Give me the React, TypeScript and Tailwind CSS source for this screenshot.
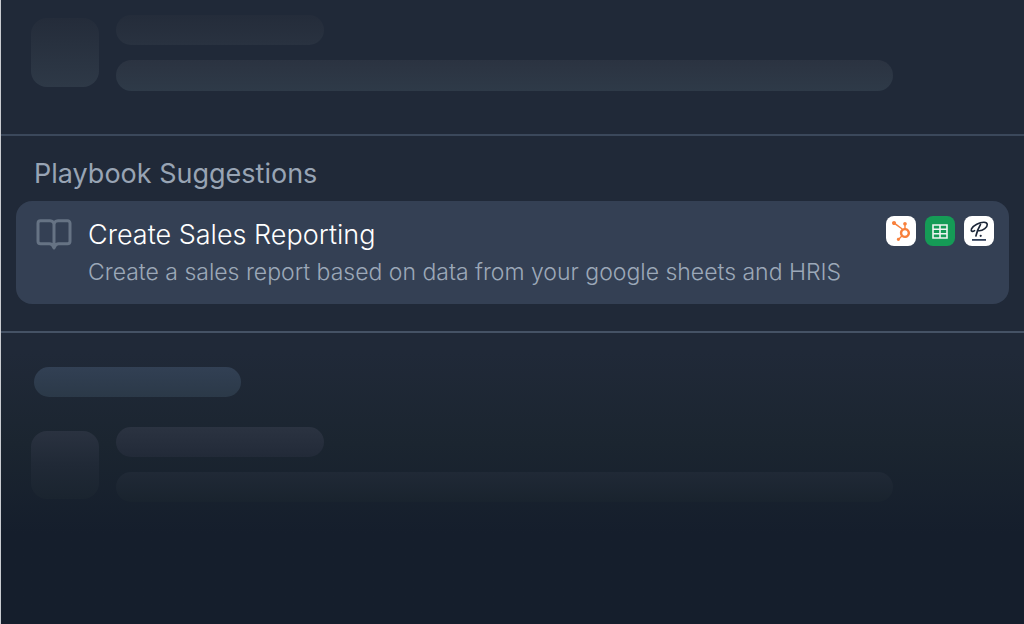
import React from "react"
import { FaHubspot } from "react-icons/fa"

function BookIcon() {
  return (
    <svg viewBox="0 0 36 36" className="h-[38px] w-9 shrink-0" fill="none" aria-hidden="true">
      <path
        d="M18 7.5C18 5.5 16.5 3.8 14 3.8H4.5C3 3.8 2 4.8 2 6.3V24.2C2 25.7 3 26.7 4.5 26.7H13.5C15.5 26.7 17 28.5 18 31C19 28.5 20.5 26.7 22.5 26.7H31.5C33 26.7 34 25.7 34 24.2V6.3C34 4.8 33 3.8 31.5 3.8H22C19.5 3.8 18 5.5 18 7.5ZM18 7.5V29"
        stroke="#667384"
        strokeWidth="3"
        strokeLinejoin="round"
      />
    </svg>
  )
}

// google sheets grid
function SheetsLogo() {
  return (
    <svg viewBox="0 0 30 30" className="h-full w-full" fill="none" aria-hidden="true">
      <path
        d="M8 9h14v13H8zM15 9v13M8 13.3h14M8 17.7h14"
        stroke="#eef4f1"
        strokeWidth="1.6"
      />
    </svg>
  )
}

// handwritten P with an underline
function PersonioLogo() {
  return (
    <svg viewBox="0 0 30 30" className="h-full w-full" fill="none" aria-hidden="true">
      <path
        d="M16.5 8.5C14.4 12 12.8 16 11.9 20M10.6 14.6C8.4 16.1 6.6 15.3 7.5 12.8C9.2 9.2 15.6 6.2 20 6.3C24.2 6.5 24.2 10 20.8 12.6C18.6 14.3 16.3 15 14.2 14.7"
        stroke="#1b2638"
        strokeWidth="1.6"
        strokeLinecap="round"
        strokeLinejoin="round"
      />
      <circle cx="16.7" cy="19.8" r="1.1" fill="#1b2638" />
      <path d="M8 23.9h14" stroke="#31405a" strokeWidth="1.8" />
    </svg>
  )
}

const apps = [
  { name: "HubSpot", bg: "bg-white", logo: <FaHubspot className="h-5 w-5 text-[#f8803c]" /> },
  { name: "Google Sheets", bg: "bg-[#159b56]", logo: <SheetsLogo /> },
  { name: "Personio", bg: "bg-white", logo: <PersonioLogo /> },
]

export default function App() {
  return (
    <main className="flex min-h-screen flex-col border-l border-[#c9ccd1] bg-[#202938] font-['Inter',sans-serif]">
      {/* previous result, still loading */}
      <div className="flex gap-[17px] border-b-2 border-[#3b485b] pt-[15px] pr-[131px] pb-[43px] pl-[30px]">
        <div className="mt-[3px] h-[69px] w-[68px] shrink-0 rounded-2xl bg-linear-to-b from-[#242c3a] to-[#2e3947]" />
        <div className="flex grow flex-col gap-[15px]">
          <div className="h-[30px] w-[208px] rounded-full bg-linear-to-b from-[#242c3a] to-[#293240]" />
          <div className="h-[31px] rounded-full bg-linear-to-b from-[#2b3341] to-[#2e3a48]" />
        </div>
      </div>

      {/* suggestions */}
      <section className="border-b-2 border-[#455265] px-[15px] pt-5 pb-[27px]">
        <h2 className="pl-[18px] text-[27px] leading-9 text-[#98a4b4]">Playbook Suggestions</h2>
        <button
          type="button"
          className="mt-[9px] flex w-full items-start rounded-2xl bg-[#344054] pt-[15px] pr-[15px] pb-[14px] pl-5 text-left"
        >
          <BookIcon />
          <span className="ml-4 flex grow flex-col">
            <span className="text-[27px] leading-[38px] font-light text-white">
              Create Sales Reporting
            </span>
            <span className="text-[23px] leading-9 font-light text-[#9ca8b8]">
              Create a sales report based on data from your google sheets and HRIS
            </span>
          </span>
          <span className="flex gap-[9px]">
            {apps.map((app) => (
              <span
                key={app.name}
                title={app.name}
                className={`flex h-[30px] w-[30px] items-center justify-center rounded-lg ${app.bg}`}
              >
                {app.logo}
              </span>
            ))}
          </span>
        </button>
      </section>

      {/* next results fade out towards the bottom */}
      <div className="grow bg-linear-to-b from-[#202938] from-[20px] via-[#1b2530] via-[110px] to-[#151e2c] to-[200px] pt-[34px] pr-[131px] pl-[30px]">
        <div className="ml-[3px] h-[30px] w-[207px] rounded-full bg-linear-to-b from-[#324054] to-[#2b3948]" />
        <div className="mt-[30px] flex gap-[17px]">
          <div className="mt-[4px] h-[68px] w-[68px] shrink-0 rounded-2xl bg-linear-to-b from-[#2a3240] via-[#202936] to-[#1a242f]" />
          <div className="flex grow flex-col gap-[15px]">
            <div className="h-[30px] w-[208px] rounded-full bg-linear-to-b from-[#2b3341] to-[#222a38]" />
            <div className="h-[30px] rounded-full bg-linear-to-b from-[#202936] to-[#19232e]" />
          </div>
        </div>
      </div>
    </main>
  )
}
